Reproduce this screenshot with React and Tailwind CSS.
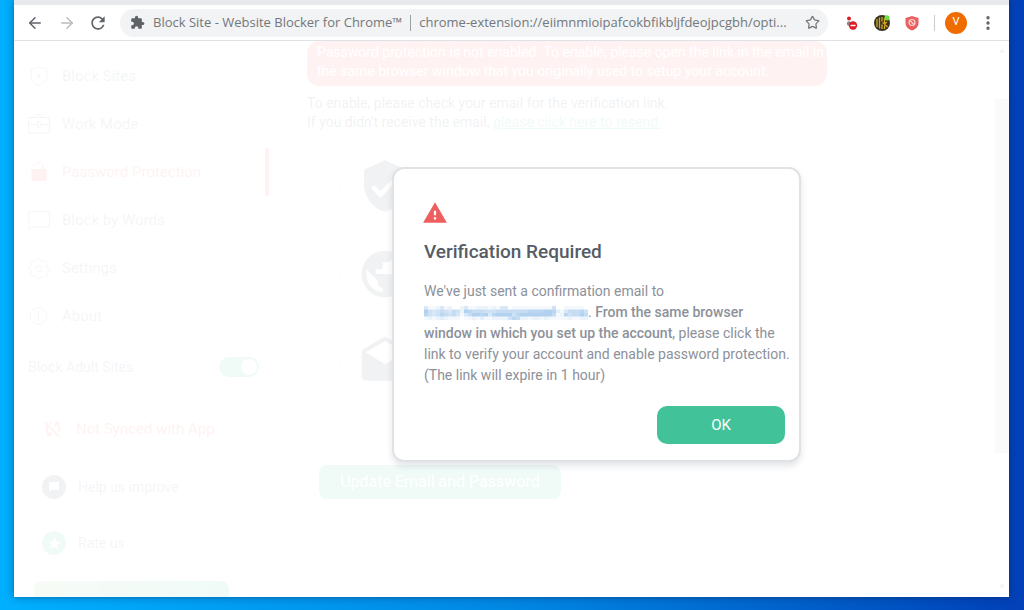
import { ArrowLeft, ArrowRight, MoreVertical, Star } from "lucide-react";
import {
  MdExtension,
  MdRefresh,
  MdWarning,
  MdVerifiedUser,
  MdPublic,
  MdDrafts,
  MdSyncDisabled,
  MdChatBubble,
  MdStar,
} from "react-icons/md";

const line = { fill: "none", stroke: "currentColor", strokeWidth: 1 };

const Ic = {
  shield: (
    <svg viewBox="0 0 22 22" className="h-[22px] w-[22px]" {...line}>
      <path d="M11 1.500c2 1.600 4.500 2.200 8 2.200v6.300c0 5-3 8.800-8 10.700-5-1.900-8-5.700-8-10.700V3.700c3.500 0 6-.6 8-2.200z" />
      <path d="M9 9l4 4M13 9l-4 4" />
    </svg>
  ),
  briefcase: (
    <svg viewBox="0 0 22 22" className="h-[22px] w-[22px]" {...line}>
      <path d="M.6 4.500h20.800v15.500H.6zM7 4.500C7 2.500 8 1.500 9.500 1.500h3c1.500 0 2.500 1 2.500 3" />
      <path d="M.6 11.500H9M13.500 11.500h8M9.500 8.500h2l1.800 3-1.800 3h-2z" />
    </svg>
  ),
  lock: (
    <svg viewBox="0 0 22 22" className="h-[22px] w-[22px]">
      <rect x="3.500" y="8" width="15" height="12" rx="1" fill="currentColor" />
      <path d="M7.500 4.500c.5-2 1.800-3.300 3.500-3.300 2.300 0 3.800 1.500 3.800 3.800v3" {...line} />
    </svg>
  ),
  chat: (
    <svg viewBox="0 0 22 22" className="h-[22px] w-[22px]" {...line}>
      <path d="M.8 2.600h20.500v15.300H5L.8 20.800z" />
    </svg>
  ),
  gear: (
    <svg viewBox="0 0 24 24" className="h-[22px] w-[22px]" {...line}>
      <path d="M10 2h4l.6 3 1.800.8 2.600-1.700 2.800 2.800-1.700 2.600.8 1.800 3 .6v3l-3 .6-.8 1.800 1.700 2.600-2.800 2.300-2.600-1.200-1.800.8L14 23h-4l-.6-2.400-1.800-.8L5 21.200l-2.800-2.500 1.700-2.600-.8-1.800-2.600-.6v-3l2.600-.6.8-1.800L2.200 6 5 3.500l2.600 1.900 1.800-.7z" />
      <circle cx="12" cy="12.500" r="3.500" />
    </svg>
  ),
  info: (
    <svg viewBox="0 0 22 22" className="h-[22px] w-[22px]" {...line}>
      <circle cx="10.500" cy="11" r="8.400" />
      <path d="M10.500 9.500v6M10.500 6.500v1.500" />
    </svg>
  ),
};

const NAV = [
  { label: "Block Sites", icon: Ic.shield },
  { label: "Work Mode", icon: Ic.briefcase },
  { label: "Password Protection", icon: Ic.lock, active: true },
  { label: "Block by Words", icon: Ic.chat },
  { label: "Settings", icon: Ic.gear },
  { label: "About", icon: Ic.info },
];

const STEPS = [
  { name: "shield", icon: <MdVerifiedUser className="h-14 w-14" /> },
  { name: "globe", icon: <MdPublic className="h-14 w-14" /> },
  { name: "mail", icon: <MdDrafts className="h-14 w-14" /> },
];

// strength of each tile in the masked address, 0-9
const MASK = [
  "41124120024112221214401111111111500111110",
  "85456546528766655566666666777788731466675",
  "75457656414688784788885788888888612756686",
  "12123211101121311222257622122121111121122",
];

function MaskedEmail() {
  return (
    <svg
      viewBox="0 0 164 14"
      preserveAspectRatio="none"
      className="inline-block h-3.5 w-[164px] align-middle"
      role="img"
      aria-label="Hidden email address"
    >
      {MASK.map((row, y) =>
        [...row].map((n, x) => (
          <rect
            key={`${x}-${y}`}
            x={x * 4}
            y={y * 3.5}
            width="4"
            height="3.5"
            fill="#78aee2"
            opacity={n / 14}
          />
        )),
      )}
    </svg>
  );
}

function Toolbar() {
  return (
    <header className="flex h-9 items-center border-b border-[#dfe1e5] bg-white pl-3 pr-3 text-[#5f6368]">
      <button type="button" aria-label="Back" className="w-8">
        <ArrowLeft size={18} />
      </button>
      <button type="button" aria-label="Forward" className="w-8 text-[#babcbe]">
        <ArrowRight size={18} />
      </button>
      <button type="button" aria-label="Reload" className="w-[30px]">
        <MdRefresh size={20} className="-ml-0.5" />
      </button>
      <div className="flex h-7 min-w-0 flex-1 items-center rounded-full bg-[#f1f3f4] pl-2.5 pr-2 font-['Open_Sans',sans-serif] text-[13px] text-[#74777b]">
        <MdExtension size={15} className="mr-2 shrink-0 text-[#5f6368]" />
        <span className="shrink-0">Block Site - Website Blocker for Chrome™</span>
        <span className="mx-2 h-4 w-px shrink-0 bg-[#9aa0a6]" />
        <input
          readOnly
          aria-label="Address"
          className="min-w-0 flex-1 bg-transparent outline-none"
          value="chrome-extension://eiimnmioipafcokbfikbljfdeojpcgbh/opti..."
        />
        <button type="button" aria-label="Bookmark" className="ml-2 shrink-0">
          <Star size={15} />
        </button>
      </div>
      <div className="ml-4 flex items-center gap-3.5">
        <svg viewBox="0 0 16 16" className="h-4 w-4">
          <circle cx="5" cy="3.500" r="2" fill="#d81f26" />
          <circle cx="5" cy="8.500" r="2.200" fill="#8a8d90" />
          <circle cx="9" cy="10.500" r="4.200" fill="#e01b22" />
          <path d="M6.500 10.500h5" stroke="#fff" strokeWidth="1.500" />
        </svg>
        <svg viewBox="0 0 16 16" className="h-4 w-4">
          <circle cx="8" cy="8" r="8" fill="#38331f" />
          <path
            d="M3 4v8M5.500 2.500v11M8 2v4.500M8 14V9.500M10.500 3v5l-2 0M10.500 14v-3.500M13 7l-2.500 2 3 3"
            fill="none"
            stroke="#d8a81c"
            strokeWidth="1.300"
          />
          <circle cx="13" cy="2.800" r="2.600" fill="#6fe046" />
        </svg>
        <svg viewBox="0 0 16 16" className="h-4 w-4">
          <path d="M8 1l6.500 2v5c0 3.500-2.500 6-6.500 7.500C4 14 1.500 11.500 1.500 8V3z" fill="#eb5f5f" />
          <circle cx="8" cy="7.500" r="3" fill="none" stroke="#fbd5d5" strokeWidth="1.200" />
          <path d="M6 5.500l4 4" stroke="#fbd5d5" strokeWidth="1.200" />
        </svg>
        <span className="h-4 w-px bg-[#c9cbce]" />
      </div>
      <button
        type="button"
        className="ml-2.5 h-[22px] w-[22px] rounded-full bg-[#ef6c00] font-['Roboto',sans-serif] text-[11px] text-white"
      >
        V
      </button>
      <button type="button" aria-label="Menu" className="ml-3">
        <MoreVertical size={18} strokeWidth={2.500} />
      </button>
    </header>
  );
}

function Sidebar() {
  return (
    <aside className="w-[255px] shrink-0 pt-[11px] text-[#78848c]">
      <nav>
        {NAV.map((item) => (
          <a
            key={item.label}
            href="#"
            className={`flex h-12 items-center gap-3 border-r-4 pl-3.5 text-[15px] ${item.active ? "border-[#eb5757] text-[#eb5757]" : "border-transparent"}`}
          >
            {item.icon}
            {item.label}
          </a>
        ))}
      </nav>
      <label className="mt-[3px] flex h-12 items-center justify-between pl-3.5 pr-2.5 text-sm">
        Block Adult Sites
        <input type="checkbox" defaultChecked className="peer sr-only" />
        <span className="flex h-5 w-10 items-center justify-end rounded-full bg-[#42c299] px-0.5">
          <span className="h-4 w-4 rounded-full bg-white" />
        </span>
      </label>
      <p className="mt-3.5 flex h-12 items-center gap-3 pl-7 text-[15px] text-[#eb5757]">
        <MdSyncDisabled size={22} />
        Not Synced with App
      </p>
      <a href="#" className="mt-2.5 flex h-12 items-center gap-3 pl-7 text-sm">
        <span className="flex h-6 w-6 items-center justify-center rounded-full bg-[#505a64] text-white">
          <MdChatBubble size={12} />
        </span>
        Help us improve
      </a>
      <a href="#" className="mt-2 flex h-12 items-center gap-3 pl-7 text-sm">
        <span className="flex h-6 w-6 items-center justify-center rounded-full bg-[#42c299] text-white">
          <MdStar size={15} />
        </span>
        Rate us
      </a>
      <div className="ml-5 mr-10 mt-3.5 h-9 rounded-lg bg-linear-to-r from-[#8fcf8f] to-[#42c299]" />
    </aside>
  );
}

function PasswordPage() {
  return (
    <main className="min-w-0 flex-1 pl-[38px] text-sm leading-[19px]">
      <p className="w-[520px] max-w-full rounded-xl bg-[#eb5757] pb-[5px] pl-2.5 pt-0.5 text-white">
        Password protection is not enabled. To enable, please open the link in the
        email in the same browser window that you originally used to setup your
        account.
      </p>
      <p className="mt-2">
        To enable, please check your email for the verification link.
        <br />
        If you didn't receive the email,{" "}
        <a href="#" className="text-[#42c299] underline">
          please click here to resend.
        </a>
      </p>
      <ol className="mt-[26px] flex flex-col gap-8 pl-[18px]">
        {STEPS.map((step) => (
          <li key={step.name} className="flex items-center gap-4">
            <span className="h-4 w-4 rounded-full border border-dotted border-[#9aa6ae]" />
            {step.icon}
          </li>
        ))}
      </ol>
      <button
        type="button"
        className="ml-3 mt-[75px] h-[34px] w-[242px] rounded-lg bg-[#42c299] text-base text-white"
      >
        Update Email and Password
      </button>
    </main>
  );
}

function VerificationDialog() {
  return (
    <section
      role="dialog"
      aria-labelledby="verify-title"
      className="absolute left-[378px] top-[126px] w-[409px] rounded-xl border-2 border-[#e0e2e5] bg-white pb-4 pl-[30px] pr-3.5 pt-[31px] shadow-[0_4px_6px_rgba(60,70,90,0.14)]"
    >
      <MdWarning size={26} className="-ml-0.5 text-[#ee6060]" />
      <h1 id="verify-title" className="mt-3 text-[19px] font-medium leading-7 text-[#555c66]">
        Verification Required
      </h1>
      <p className="-mr-2 mt-[15px] text-sm leading-[21px] text-[#8c919a]">
        We've just sent a confirmation email to
        <br />
        <MaskedEmail />.{" "}
        <strong className="font-medium">
          From the same browser window in which you set up the account
        </strong>
        , please click the link to verify your account and enable password
        protection.
        <br />
        (The link will expire in 1 hour)
      </p>
      <div className="mt-5 flex justify-end">
        <button
          type="button"
          className="h-[38px] w-32 rounded-[10px] bg-[#42c299] text-[15px] text-white"
        >
          OK
        </button>
      </div>
    </section>
  );
}

export default function App() {
  return (
    <div className="flex h-screen bg-linear-to-r from-[#00b0ff] via-[#0088e4] to-[#0340b8] pb-[13px] pl-3.5 pr-[15px]">
      <div className="flex min-w-0 flex-1 flex-col bg-white shadow-[0_0_8px_rgba(0,30,80,0.5)]">
        <div className="h-[5px] shrink-0 bg-[#e7e9ec]" />
        <Toolbar />
        <div className="relative flex min-h-0 flex-1 overflow-hidden font-['Roboto',sans-serif] text-[#505a64]">
          <Sidebar />
          <PasswordPage />
          <div className="flex w-3.5 flex-col items-center justify-between py-1.5 text-[8px] leading-none">
            <span>▲</span>
            <span className="-mt-[86px] h-[354px] w-full bg-[#c0c0c0]" />
            <span>▼</span>
          </div>
          <div className="absolute inset-0 bg-white/92" />
          <VerificationDialog />
        </div>
      </div>
    </div>
  );
}
